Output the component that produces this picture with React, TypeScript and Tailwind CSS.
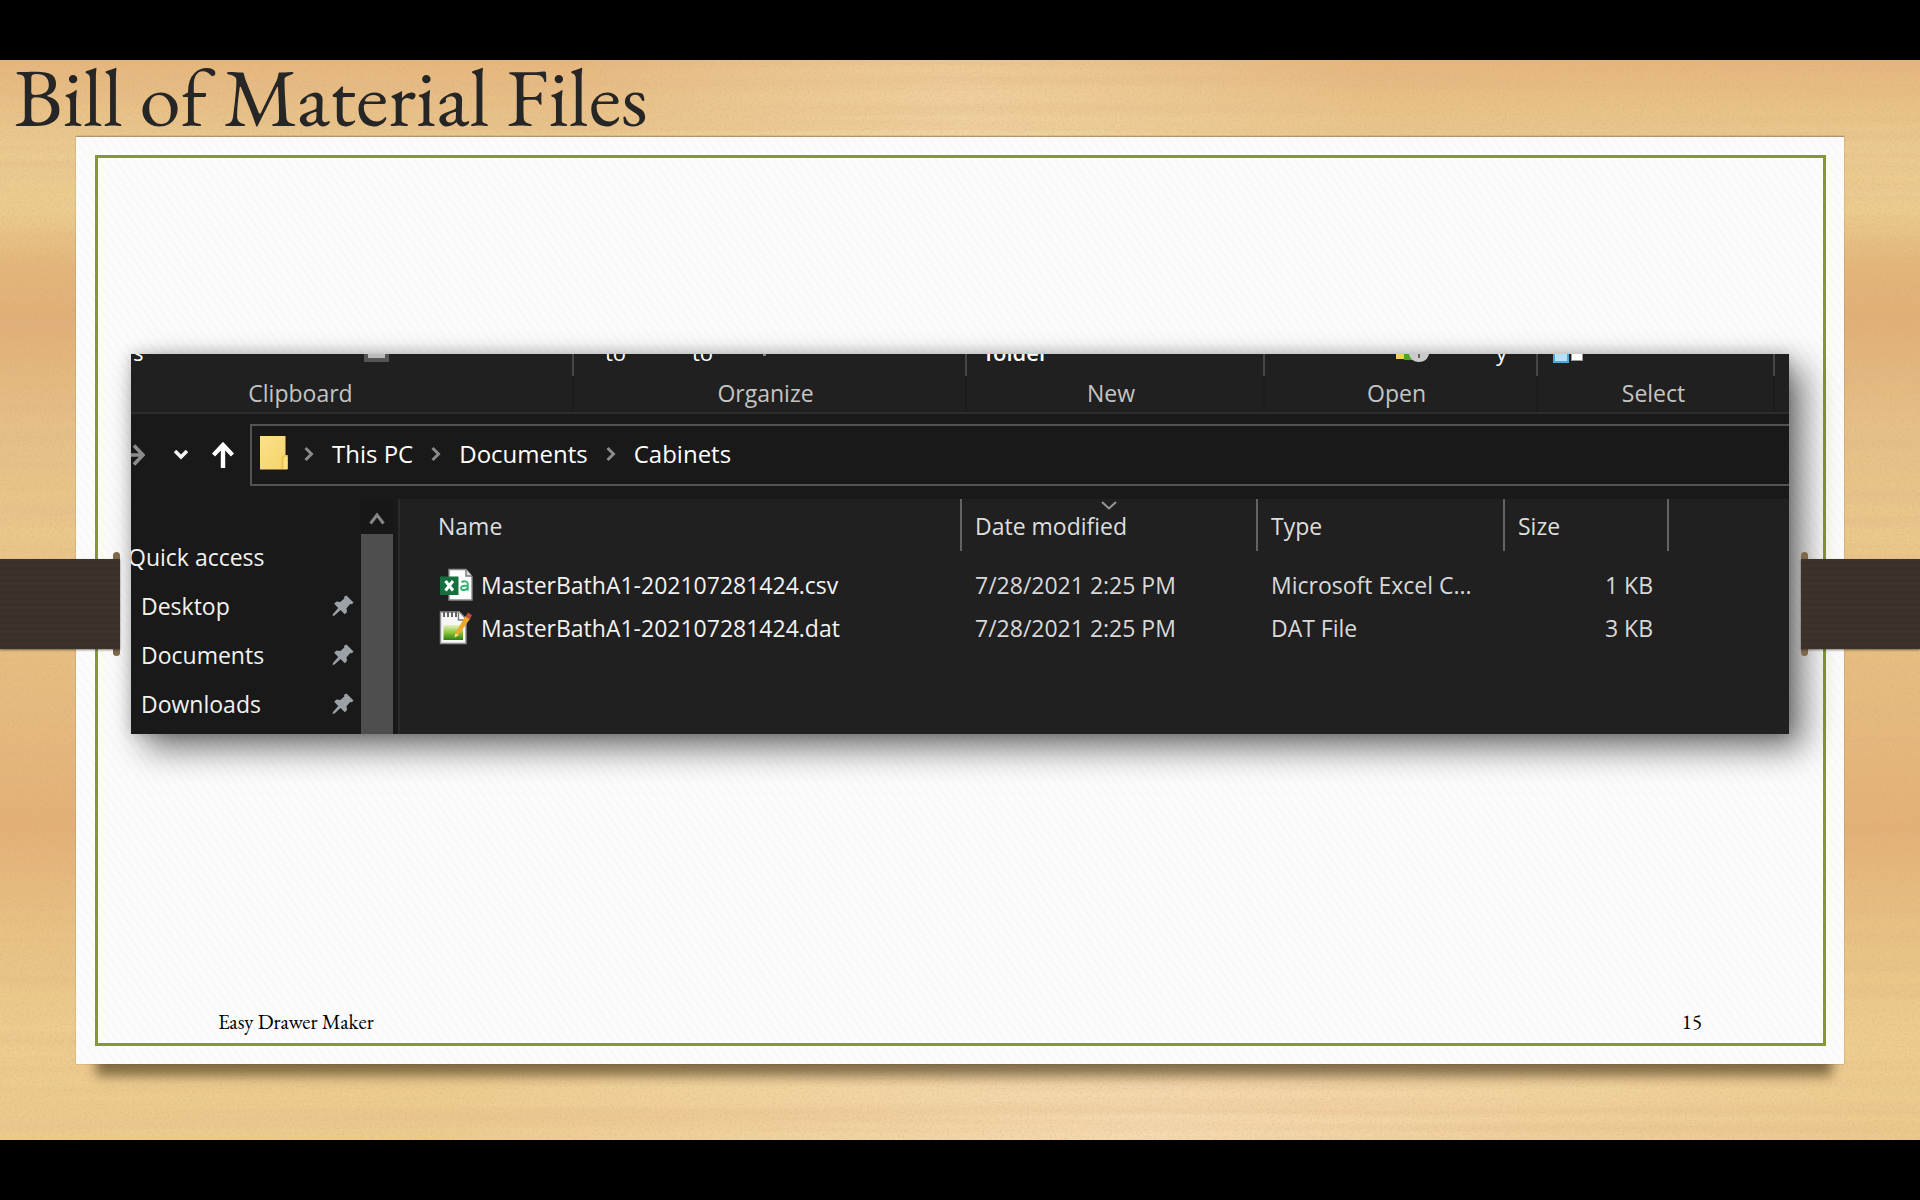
import React from 'react';

const groups = [
  { label: 'Clipboard', box: 'w-[443px]', foot: 'pr-[102px]' },
  { label: 'Organize', box: 'w-[393px]', foot: 'pr-2' },
  { label: 'New', box: 'w-[298px]', foot: 'pr-2' },
  { label: 'Open', box: 'w-[273px]', foot: 'pr-2' },
  { label: 'Select', box: 'w-[237px]', foot: 'pr-1' },
];

const files = [
  { name: 'MasterBathA1-202107281424.csv', date: '7/28/2021 2:25 PM', type: 'Microsoft Excel C...', size: '1 KB', icon: <ExcelIcon /> },
  { name: 'MasterBathA1-202107281424.dat', date: '7/28/2021 2:25 PM', type: 'DAT File', size: '3 KB', icon: <NotepadIcon /> },
];

function ExcelIcon() {
  return (
    <svg width="34" height="34" viewBox="0 0 34 34" aria-hidden="true" className="shrink-0">
      <path d="M10 1.500h17l6 7V32H10z" fill="#fdfdfd" stroke="#8b8b8b" strokeWidth="1.400" />
      <path d="M27 1.500v6.500h6" fill="#ddd" stroke="#777" strokeWidth="1.400" />
      <path d="M1 8.500h18.500v18.500H1z" fill="#14713f" />
      <path d="M6.500 13l7.500 9.500M14 13L6.500 22.500" stroke="#fff" strokeWidth="3" fill="none" />
      <path d="M22.500 14.200c2-1.400 6.300-1.400 6.300 1.800v6.500M28.800 17.500c-3.500 0-6.800.3-6.800 2.500 0 3 5.500 2.600 6.800-.6" stroke="#35b272" strokeWidth="1.900" fill="none" />
    </svg>
  );
}

function NotepadIcon() {
  return (
    <svg width="34" height="34" viewBox="0 0 34 34" aria-hidden="true" className="shrink-0">
      <defs>
        <linearGradient id="noteGreen" x1="0" y1="0" x2="0" y2="1">
          <stop offset="0" stopColor="#e6f2c4" />
          <stop offset="0.500" stopColor="#8cc63a" />
          <stop offset="1" stopColor="#2f7d12" />
        </linearGradient>
      </defs>
      <path d="M1.500 1h19l6.500 7v24.500H1.500z" fill="#f6f6f4" stroke="#8f8f8f" strokeWidth="1.400" />
      <path d="M4.500 14h19.500v15H4.500z" fill="url(#noteGreen)" />
      <path d="M5 1v5M9 1v5M13 1v5M17 1v5" stroke="#555" strokeWidth="1.800" />
      <path d="M19.500 2v7h6" stroke="#777" strokeWidth="1.400" fill="#fff" />
      <path d="M15.500 26.500l1.500-6L27 4.500l4.500 2.800-11.500 16z" fill="#eda92a" />
      <path d="M26.500 5.500l2.500-4 4 2.800-2.500 4z" fill="#c0503f" />
      <path d="M15.500 26.500l1-4 3 1.800z" fill="#f8e3b0" />
    </svg>
  );
}

function Pin() {
  return (
    <svg width="22" height="22" viewBox="0 0 22 22" aria-hidden="true">
      <path d="M14.500 0.500l7 7-1.500 1.800-1.800-.3-3.700 4.200.5 3.800-2.200 2.200-4.300-4.200-6 5.500-2 .5.500-2 5.200-6-4-4.200 2.200-2.200 3.900.5 4-3.700-.3-1.700z" fill="#9ba1a6" />
    </svg>
  );
}

function Crumb() {
  return (
    <svg width="10" height="16" viewBox="0 0 10 16" aria-hidden="true" className="shrink-0">
      <path d="M1.500 2l6 6-6 6" fill="none" stroke="#8a8a8a" strokeWidth="3" />
    </svg>
  );
}

function Wood() {
  return (
    <div className="absolute inset-0 overflow-hidden bg-[linear-gradient(180deg,#e6b67e_0%,#ebcb8f_8%,#eccd90_14%,#e4b67a_19%,#e1af77_24%,#e6bf86_33%,#ebc88c_44%,#e8bf82_54%,#e6b97e_62%,#e3b076_71%,#e9c184_80%,#eecd8f_90%,#eccb8e_100%)]">
      <div className="absolute inset-0 bg-[radial-gradient(ellipse_at_60%_100%,rgba(248,222,186,0.8)_0%,rgba(248,222,186,0)_45%)]" />
      <div className="absolute inset-0 bg-[radial-gradient(ellipse_at_50%_6%,rgba(244,220,176,0.6)_0%,rgba(244,220,176,0)_30%)]" />
      <svg className="absolute inset-0 h-full w-full" aria-hidden="true">
        <filter id="grain" x="0" y="0" width="100%" height="100%">
          <feTurbulence type="fractalNoise" baseFrequency="0.001 0.070" numOctaves="3" seed="7" />
          <feColorMatrix values="0 0 0 0 0.760  0 0 0 0 0.460  0 0 0 0 0.240  0.800 0 0 0 -0.320" />
        </filter>
        <filter id="speck" x="0" y="0" width="100%" height="100%">
          <feTurbulence type="fractalNoise" baseFrequency="0.400 0.500" numOctaves="2" seed="3" />
          <feColorMatrix values="0 0 0 0 0.550  0 0 0 0 0.380  0 0 0 0 0.150  0.600 0 0 0 -0.260" />
        </filter>
        <rect width="100%" height="100%" filter="url(#grain)" />
        <rect width="100%" height="100%" filter="url(#speck)" />
      </svg>
    </div>
  );
}

function Strap({ side }: { side: 'left' | 'right' }) {
  const left = side === 'left';
  return (
    <div aria-hidden="true" className={left ? 'absolute left-0 top-[492px] h-[104px] w-[120px]' : 'absolute right-0 top-[492px] h-[104px] w-[119px]'}>
      <div className={left ? 'absolute inset-y-0 right-0 w-[7px] rounded-full bg-[#7d6849]' : 'absolute inset-y-0 left-0 w-[7px] rounded-full bg-[#7d6849]'} />
      <div className="absolute inset-x-0 inset-y-[7px] bg-[repeating-linear-gradient(180deg,#3c3229_0px,#3c3229_3px,#362d25_4px,#3f352b_6px)] shadow-[0_1px_2px_rgba(0,0,0,0.5)]" />
    </div>
  );
}

const clipped = '-mt-[14px] absolute top-0 text-[22px] leading-6 text-white';

function RibbonPieces({ label }: { label: string }) {
  if (label === 'Clipboard')
    return (
      <>
        <span className={clipped + ' left-[2px]'}>s</span>
        <span className="absolute left-[233px] top-0 h-2 w-[25px] border-x-4 border-b-4 border-[#555] bg-[#bbb]" />
      </>
    );
  if (label === 'Organize')
    return (
      <>
        <span className={clipped + ' left-[31px]'}>to</span>
        <span className={clipped + ' left-[118px]'}>to</span>
        <span className="absolute left-[189px] top-0 h-[2px] w-[3px] bg-[#888]" />
      </>
    );
  if (label === 'New') return <span className={clipped + ' left-[18px] font-semibold'}>folder</span>;
  if (label === 'Open')
    return (
      <>
        <svg width="34" height="9" viewBox="0 0 34 9" className="absolute left-[131px] top-0" aria-hidden="true">
          <path d="M0 0h10v5H0z" fill="#f4cf55" />
          <path d="M8 0h9v6H8z" fill="#4aa32f" />
          <path d="M13 0h20c-1 5-5 8-10 8s-9-3-10-8z" fill="#c9ccca" />
          <path d="M22 0h2v4h-2z" fill="#666" />
        </svg>
        <span className={clipped + ' left-[231px]'}>y</span>
      </>
    );
  return (
    <>
      <span className="absolute left-[15px] top-0 h-[9px] w-4 border-x-2 border-b-2 border-[#4aa9de] bg-[#b5e2fa]" />
      <span className="absolute left-[33px] top-0 h-[7px] w-3 border-x border-b border-[#999] bg-white" />
    </>
  );
}

function Explorer() {
  return (
    <section className="ml-[33px] mr-[34px] mt-[196px] bg-[#191919] font-['Open_Sans',sans-serif] text-[23px] leading-[30px] text-[#f2f2f2] shadow-[14px_14px_32px_0px_rgba(0,0,0,0.55),0_0_14px_rgba(0,0,0,0.2)]">
      <div className="flex overflow-hidden border-b-2 border-[#2c2c2c] bg-[#202020]">
        {groups.map((g) => (
          <div key={g.label} className={g.box + ' shrink-0'}>
            <div className="relative h-[22px] overflow-hidden border-r-2 border-[#464646]">
              <RibbonPieces label={g.label} />
            </div>
            <div className={g.foot + ' h-9 border-r-2 border-[#1c1c1c] text-center leading-[34px] text-[#c4c4c4]'}>{g.label}</div>
          </div>
        ))}
      </div>

      <nav className="flex items-center pb-[13px] pt-[10px]" aria-label="Address">
        <button aria-label="Forward" className="w-[14px] shrink-0">
          <svg width="14" height="24" viewBox="0 0 14 24" aria-hidden="true">
            <path d="M0 12h12M3 2.500L12 12l-9 9.500" fill="none" stroke="#8c8c8c" strokeWidth="3.600" />
          </svg>
        </button>
        <button aria-label="Recent locations" className="ml-[29px] shrink-0">
          <svg width="14" height="10" viewBox="0 0 14 10" aria-hidden="true">
            <path d="M1 1l6 6 6-6" fill="none" stroke="#f4f4f4" strokeWidth="3.600" />
          </svg>
        </button>
        <button aria-label="Up" className="ml-6 shrink-0">
          <svg width="22" height="26" viewBox="0 0 22 26" aria-hidden="true">
            <path d="M11 26V3M1.500 13L11 3l9.500 10" fill="none" stroke="#fff" strokeWidth="4.400" />
          </svg>
        </button>
        <div className="ml-4 flex h-[62px] grow items-center border-2 border-r-0 border-[#535353] pl-2 text-[24px] font-medium text-white">
          <svg width="28" height="34" viewBox="0 0 28 34" aria-hidden="true" className="mb-1 shrink-0">
            <defs>
              <linearGradient id="folder" x1="0" y1="0" x2="1" y2="1">
                <stop offset="0" stopColor="#fbe08c" />
                <stop offset="1" stopColor="#f5d468" />
              </linearGradient>
            </defs>
            <path d="M0 0h25.500v19h2v14.500H0z" fill="url(#folder)" />
            <path d="M21.500 33V21l3-2h3v14z" fill="#ecc34a" />
            <path d="M23.500 33V22l1.500-1.500h2.500V33z" fill="#fae184" />
          </svg>
          <div className="flex items-center gap-[18px] pb-[2px] pl-4">
            <Crumb />
            <button>This PC</button>
            <Crumb />
            <button>Documents</button>
            <Crumb />
            <button>Cabinets</button>
          </div>
        </div>
      </nav>

      <div className="flex">
        <aside className="w-[230px] shrink-0 overflow-hidden pb-[6px] pt-[33px]">
          <a href="#quick" className="-ml-[3px] flex h-[49px] items-center">Quick access</a>
          {['Desktop', 'Documents', 'Downloads'].map((n) => (
            <a key={n} href={'#' + n} className="flex h-[49px] items-center justify-between pl-[10px] pr-[7px]">
              {n}
              <Pin />
            </a>
          ))}
        </aside>
        <div className="mr-[5px] flex w-8 shrink-0 flex-col bg-[#171717]">
          <div className="flex h-[35px] items-center justify-center pt-1">
            <svg width="16" height="13" viewBox="0 0 16 13" aria-hidden="true">
              <path d="M1.500 11.500L8 3l6.500 8.500" fill="none" stroke="#858585" strokeWidth="3" />
            </svg>
          </div>
          <div className="grow bg-[#4e4e4e]" />
        </div>
        <div className="min-w-0 grow border-l-2 border-[#2a2a2a] bg-[#202020]">
          <table className="w-full table-fixed border-collapse text-left">
            <colgroup>
              <col className="w-[562px]" />
              <col className="w-[296px]" />
              <col className="w-[247px]" />
              <col className="w-[164px]" />
              <col />
            </colgroup>
            <thead>
              <tr className="h-16 align-top text-[#dedede]">
                <th className="p-0 font-normal">
                  <div className="h-[52px] border-r-2 border-[#636363] pl-[38px] leading-[54px]">Name</div>
                </th>
                <th className="p-0 font-normal">
                  <div className="relative h-[52px] border-r-2 border-[#636363] pl-[13px] leading-[54px]">
                    Date modified
                    <svg width="16" height="9" viewBox="0 0 16 9" aria-hidden="true" className="absolute left-[139px] top-[2px]">
                      <path d="M1 1l7 6.500L15 1" fill="none" stroke="#969696" strokeWidth="2" />
                    </svg>
                  </div>
                </th>
                <th className="p-0 font-normal">
                  <div className="h-[52px] border-r-2 border-[#636363] pl-[13px] leading-[54px]">Type</div>
                </th>
                <th className="p-0 font-normal">
                  <div className="h-[52px] border-r-2 border-[#636363] pl-[13px] leading-[54px]">Size</div>
                </th>
                <td />
              </tr>
            </thead>
            <tbody>
              {files.map((f) => (
                <tr key={f.name} className="h-[43px] text-[#d8d8d8]">
                  <td className="p-0">
                    <div className="flex items-center gap-2 pl-[39px] text-[#f2f2f2]">
                      {f.icon}
                      <span>{f.name}</span>
                    </div>
                  </td>
                  <td className="py-0 pl-[13px] pr-0">{f.date}</td>
                  <td className="py-0 pl-[13px] pr-0">{f.type}</td>
                  <td className="py-0 pl-0 pr-4 text-right">{f.size}</td>
                  <td />
                </tr>
              ))}
            </tbody>
          </table>
        </div>
      </div>
    </section>
  );
}

export default function App() {
  return (
    <div className="flex min-h-screen flex-col bg-black py-[60px]">
      <main className="relative isolate flex grow flex-col overflow-hidden">
        <Wood />
        <h1 className="relative h-[76px] pl-[14px] font-['Garamond','EB_Garamond','Liberation_Serif',serif] text-[83px] leading-[74px] text-[#262626]">Bill of Material Files</h1>
        <div className="relative mx-[76px] mb-[76px] flex grow flex-col">
          <div aria-hidden="true" className="absolute -bottom-[12px] left-[20px] right-[12px] h-10 bg-[#4b3a1c]/65 blur-[6px]" />
          <div className="relative flex grow flex-col border-t border-[#b0946a] bg-[#fbfbfb] bg-[repeating-linear-gradient(55deg,#fcfcfc_0px,#fcfcfc_3px,#f8f8f8_5px,#fcfcfc_7px)] pb-[18px] pl-[19px] pr-[18px] pt-[18px] shadow-[0_0_1px_rgba(90,70,40,0.7)]">
            <div className="flex grow flex-col border-[3px] border-[#84992f]">
              <Explorer />
              <footer className="mt-auto flex justify-between pb-[9px] pl-[120px] pr-[121px] font-['Garamond','EB_Garamond','Liberation_Serif',serif] text-[21px] leading-6 text-black">
                <span>Easy Drawer Maker</span>
                <span>15</span>
              </footer>
            </div>
          </div>
        </div>
        <Strap side="left" />
        <Strap side="right" />
      </main>
    </div>
  );
}
